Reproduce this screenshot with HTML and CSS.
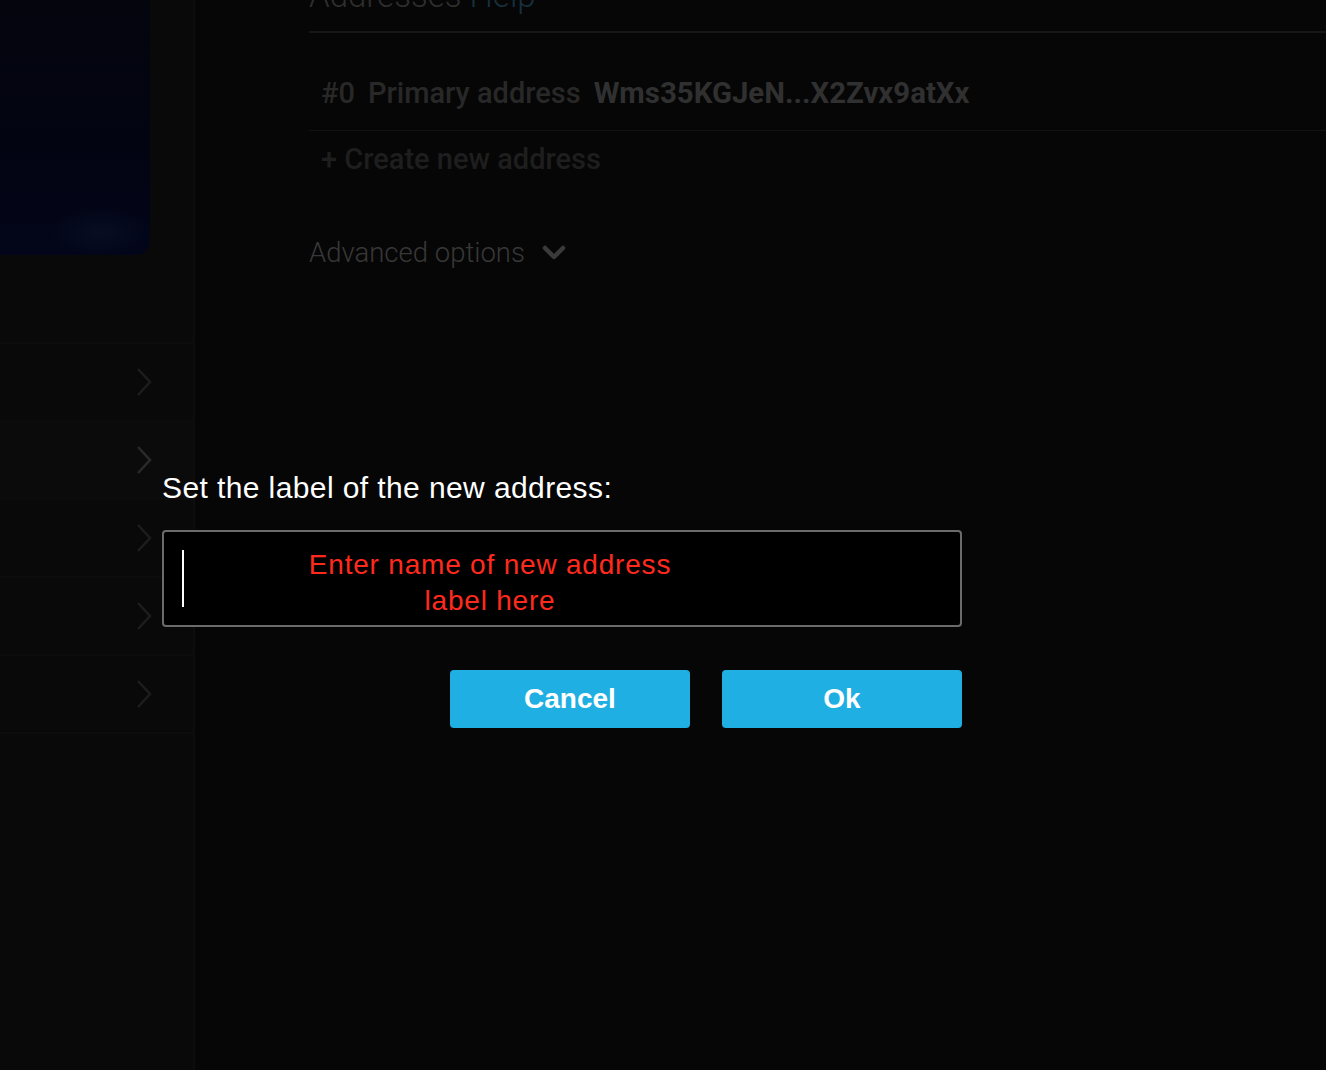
FILE: index.html
```html
<!DOCTYPE html>
<html>
<head>
<meta charset="utf-8">
<link rel="stylesheet" href="styles.css">
</head>
<body>
<div class="app">
  <aside class="sidebar">
    <div class="card"></div>
    <nav class="menu">
      <div class="menu-row"><svg class="chev" viewBox="0 0 16 30"><path d="M2 2 L14 15 L2 28"/></svg></div>
      <div class="menu-row active"><svg class="chev" viewBox="0 0 16 30"><path d="M2 2 L14 15 L2 28"/></svg></div>
      <div class="menu-row"><svg class="chev" viewBox="0 0 16 30"><path d="M2 2 L14 15 L2 28"/></svg></div>
      <div class="menu-row"><svg class="chev" viewBox="0 0 16 30"><path d="M2 2 L14 15 L2 28"/></svg></div>
      <div class="menu-row"><svg class="chev" viewBox="0 0 16 30"><path d="M2 2 L14 15 L2 28"/></svg></div>
    </nav>
  </aside>
  <main class="main">
    <h1 class="title">Addresses <span class="help">Help</span></h1>
    <div class="addr-row">
      <span class="idx">#0</span>
      <span class="lbl">Primary address</span>
      <span class="addr">Wms35KGJeN...X2Zvx9atXx</span>
    </div>
    <div class="create">+ Create new address</div>
    <div class="advanced">Advanced options
      <svg class="down" viewBox="0 0 24 16"><path d="M3 3 L12 12 L21 3"/></svg>
    </div>
  </main>
</div>

<div class="overlay">
  <div class="dialog">
    <div class="prompt">Set the label of the new address:</div>
    <div class="input">
      <span class="caret"></span>
      <span class="placeholder">Enter name of new address label here</span>
    </div>
    <div class="buttons">
      <button class="btn">Cancel</button>
      <button class="btn">Ok</button>
    </div>
  </div>
</div>
</body>
</html>
```
FILE: styles.css
```css
html, body {
  margin: 0;
  padding: 0;
  height: 1070px;
  overflow: hidden;
  background: #060606;
}
body {
  font-family: Roboto, "Liberation Sans", sans-serif;
  position: relative;
}
.app {
  display: flex;
  height: 1070px;
}
.sidebar {
  width: 193px;
  flex: none;
  background: #090909;
  border-right: 2px solid #0d0d0d;
}
.card {
  width: 150px;
  height: 255px;
  border-bottom-right-radius: 14px;
  background:
    radial-gradient(ellipse 50px 24px at 100px 232px, rgba(20,30,60,0.3), rgba(20,30,60,0) 100%),
    linear-gradient(180deg, #04050d 0%, #020412 60%, #03061a 100%);
}
.menu {
  margin-top: 87px;
  border-top: 2px solid #0c0c0c;
}
.menu-row {
  height: 76px;
  border-bottom: 2px solid #0c0c0c;
  display: flex;
  align-items: center;
  justify-content: flex-end;
  padding-right: 41px;
}
.menu-row.active {
  background: #0b0b0b;
}
.chev {
  width: 16px;
  height: 30px;
  fill: none;
  stroke: #1d1d1d;
  stroke-width: 2.5;
}
.menu-row.active .chev {
  stroke: #2a2a2a;
}
.main {
  flex: 1;
  padding-left: 114px;
}
.title {
  margin: -24px 0 0 0;
  font-size: 33px;
  line-height: 40px;
  font-weight: 300;
  color: #2e2e2e;
  padding-bottom: 15px;
  border-bottom: 2px solid #161616;
}
.help {
  color: #17303d;
}
.addr-row {
  padding: 45px 12px 22px;
  line-height: 30px;
  font-size: 29px;
  font-weight: 500;
  border-bottom: 1px solid #121212;
  display: flex;
  align-items: baseline;
  gap: 13px;
  color: #282828;
}
.addr-row .addr {
  color: #303030;
  font-weight: 700;
  font-size: 29.4px;
}
.create {
  padding: 13px 12px 0;
  line-height: 30px;
  font-size: 29px;
  font-weight: 500;
  color: #1e1e1e;
}
.advanced {
  margin-top: 64px;
  line-height: 30px;
  font-size: 27.5px;
  font-weight: 300;
  color: #383838;
  display: flex;
  align-items: center;
  gap: 17px;
}
.down {
  width: 24px;
  height: 16px;
  fill: none;
  stroke: #3a3a3a;
  stroke-width: 4.5;
  stroke-linecap: round;
  stroke-linejoin: round;
}
.overlay {
  position: absolute;
  inset: 0;
}
.dialog {
  position: absolute;
  left: 162px;
  top: 470px;
  width: 800px;
  font-family: "Liberation Sans", Arial, sans-serif;
}
.prompt {
  font-size: 30px;
  line-height: 36px;
  letter-spacing: 0.4px;
  color: #ffffff;
}
.input {
  margin-top: 24px;
  border: 2px solid #6b6b6b;
  border-radius: 4px;
  background: #000;
  display: flex;
  align-items: flex-start;
  padding-top: 15px;
  box-sizing: content-box;
  height: 78px;
}
.caret {
  width: 2px;
  height: 57px;
  background: #fff;
  margin: 3px 0 0 18px;
  flex: none;
}
.placeholder {
  margin-left: 106px;
  width: 400px;
  text-align: center;
  color: #ff2a1d;
  font-size: 28px;
  line-height: 36px;
  letter-spacing: 0.8px;
}
.buttons {
  margin-top: 43px;
  display: flex;
  justify-content: flex-end;
  gap: 32px;
}
.btn {
  width: 240px;
  height: 58px;
  border: none;
  border-radius: 4px;
  background: #20afe2;
  color: #fff;
  font-family: "Liberation Sans", Arial, sans-serif;
  font-weight: 700;
  font-size: 28px;
  padding: 0;
}
```
